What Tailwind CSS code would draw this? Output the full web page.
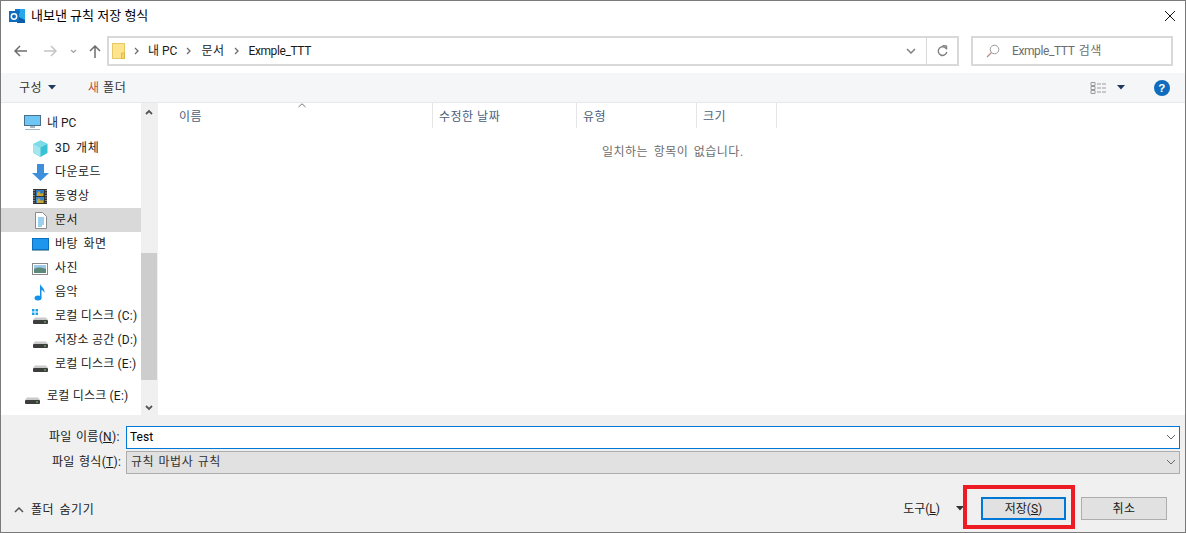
<!DOCTYPE html>
<html lang="ko">
<head>
<meta charset="utf-8">
<script src="https://cdn.jsdelivr.net/npm/@tailwindcss/browser@4"></script>
</head>
<body class="bg-white">
<div class="w-[1186px] h-[533px] overflow-hidden flex flex-col border border-[#7a7a7a] bg-white text-[12px] leading-[16px] tracking-[0.5px] [word-spacing:2px] text-[#1a1a1a] font-['Roboto','Noto_Sans_CJK_KR',sans-serif]">
  <!-- title -->
  <div class="h-[29px] shrink-0 flex items-center pl-[8px] pr-[9px]">
    <svg width="17" height="16" viewBox="0 0 17 16" class="mr-[5px]"><rect x="6" y="1" width="10" height="13" fill="#28a8ea"/><rect x="6" y="1" width="5" height="4" fill="#0f78d4"/><path d="M8 8l8 4v3H8z" fill="#0a5ea8"/><rect x="0" y="3" width="10" height="11" fill="#0f6cbd"/><circle cx="5" cy="8.500" r="2.700" fill="none" stroke="#fff" stroke-width="1.500"/></svg>
    <span class="text-[13px] text-black tracking-normal [word-spacing:0]">내보낸 규칙 저장 형식</span>
    <svg width="12" height="12" viewBox="0 0 12 12" class="ml-auto"><path d="M1 1l10 10M11 1L1 11" stroke="#111" stroke-width="1"/></svg>
  </div>
  <!-- nav -->
  <div class="h-[36px] shrink-0 flex items-center pt-[6px] pl-[13px] pr-[12px]">
    <div class="w-[93px] shrink-0 flex items-center">
      <svg width="13" height="12" viewBox="0 0 13 12"><path d="M6 1L1 6l5 5M1 6h12" fill="none" stroke="#6d6d6d" stroke-width="1.500"/></svg>
      <svg width="13" height="12" viewBox="0 0 13 12" class="ml-[17px]"><path d="M7 1l5 5-5 5M12 6H0" fill="none" stroke="#c4c4c4" stroke-width="1.500"/></svg>
      <svg width="7" height="5" viewBox="0 0 7 5" class="ml-[13px]"><path d="M1 1l2.500 2.500L6 1" fill="none" stroke="#a0a0a0" stroke-width="1.200"/></svg>
      <svg width="12" height="13" viewBox="0 0 12 13" class="ml-[12px]"><path d="M1 6l5-5 5 5M6 1v12" fill="none" stroke="#6d6d6d" stroke-width="1.500"/></svg>
    </div>
    <div class="w-[852px] h-[30px] shrink-0 border-2 border-[#d9d9d9] border-r-0 flex items-center pl-[3px]">
      <svg width="13" height="16" viewBox="0 0 13 16"><rect x="0.500" y="0.500" width="12" height="15" fill="#fde48d" stroke="#e6c868"/><path d="M9.500 10v5.500h3V10z" fill="#f7d36b" stroke="#e0b94e"/></svg>
      <svg width="5" height="8" viewBox="0 0 5 8" class="ml-[9px]"><path d="M1 1l3 3-3 3" fill="none" stroke="#6d6d6d" stroke-width="1.300"/></svg>
      <span class="ml-[9px] tracking-normal [word-spacing:0]">내 PC</span>
      <svg width="5" height="8" viewBox="0 0 5 8" class="ml-[9px]"><path d="M1 1l3 3-3 3" fill="none" stroke="#6d6d6d" stroke-width="1.300"/></svg>
      <span class="ml-[10px]">문서</span>
      <svg width="5" height="8" viewBox="0 0 5 8" class="ml-[9px]"><path d="M1 1l3 3-3 3" fill="none" stroke="#6d6d6d" stroke-width="1.300"/></svg>
      <span class="ml-[10px] tracking-[-0.4px]">Exmple_TTT</span>
      <svg width="10" height="6" viewBox="0 0 10 6" class="ml-auto mr-[10px]"><path d="M1 1l4 4 4-4" fill="none" stroke="#808080" stroke-width="1.500"/></svg>
      <div class="w-[33px] h-[30px] shrink-0 border-2 border-l-[1px] border-[#d9d9d9] flex items-center justify-center">
        <svg width="11" height="12" viewBox="0 0 11 12"><path d="M9 3.500A4.300 4.300 0 1 0 9.800 7" fill="none" stroke="#808080" stroke-width="1.400"/><path d="M5.500 0.500L9.500 1v3.500" fill="none" stroke="#808080" stroke-width="1.400"/></svg>
      </div>
    </div>
    <div class="ml-[12px] w-[202px] h-[30px] shrink-0 border-2 border-[#d9d9d9] flex items-center pl-[13px] text-[#6d6d6d]">
      <svg width="14" height="14" viewBox="0 0 14 14"><circle cx="8.500" cy="5.500" r="4.300" fill="none" stroke="#9a9a9a"/><path d="M5.500 8.500L1 13" stroke="#b58a8a" stroke-width="1.200"/></svg>
      <span class="ml-[12px] tracking-[-0.4px]">Exmple_TTT <span class="tracking-[0.5px]">검색</span></span>
    </div>
  </div>
  <div class="h-[7px] shrink-0"></div>
  <!-- toolbar -->
  <div class="h-[30px] shrink-0 bg-[#f5f6f7] border-b border-[#e8e8e8] flex items-center pl-[18px] pr-[15px] text-[#333]">
    <span>구성</span>
    <svg width="8" height="5" viewBox="0 0 8 5" class="ml-[6px]"><path d="M0 0h8L4 4.500z" fill="#1f3a5f"/></svg>
    <span class="ml-[32px] [word-spacing:0]"><span class="text-[#b5533c]">새</span> 폴더</span>
    <svg width="17" height="14" viewBox="0 0 17 14" class="ml-auto"><path d="M1 1.500h4v3H1zM1 5.500h4v3H1zM1 9.500h4v3H1z" fill="none" stroke="#9a9a9a"/><path d="M7 3h4M12 3h4M7 7h4M12 7h4M7 11h4M12 11h4" stroke="#9a9a9a"/></svg>
    <svg width="8" height="5" viewBox="0 0 8 5" class="ml-[10px]"><path d="M0 0h8L4 4.500z" fill="#1f3a5f"/></svg>
    <svg width="16" height="16" viewBox="0 0 16 16" class="ml-[29px]"><circle cx="8" cy="8" r="8" fill="#0f6cbd"/><text x="8" y="12" text-anchor="middle" font-size="11.500" font-weight="700" fill="#fff" font-family="Liberation Sans">?</text></svg>
  </div>
  <!-- main -->
  <div class="h-[312px] shrink-0 flex">
    <div class="w-[140px] shrink-0 relative overflow-hidden">
      <div class="absolute left-[23px] top-[8px] h-[24px] w-[117px] flex items-center gap-[6px]">
        <svg width="17" height="16" viewBox="0 0 17 16" class="shrink-0"><rect x="0.500" y="0.500" width="16" height="10" fill="#6ec6f5" stroke="#4a6f8a"/><path d="M6 11h5v2H6zM1 14h15v1H1z" fill="#a9b6c0"/></svg><span class="[word-spacing:0] tracking-normal">내 PC</span>
      </div>
      <div class="pt-[33px] pl-[31px]">
        <div class="h-[24px] flex items-center gap-[6px]">
          <svg width="17" height="17" viewBox="0 0 17 17" class="shrink-0"><path d="M8.500 0.500l7 3.500v9l-7 4-7-4V4z" fill="#39c1d6"/><path d="M1.500 4l7 3.500v9.500l-7-4z" fill="#a5e6ee"/><path d="M8.500 0.500l7 3.500-7 3.500-7-3.500z" fill="#7fdbe8"/></svg><span>3D 개체</span>
        </div>
        <div class="h-[24px] flex items-center gap-[6px]">
          <svg width="17" height="17" viewBox="0 0 17 17" class="shrink-0"><path d="M5 0h7v9h5l-8.500 8L0 9h5z" fill="#3d8fdc"/></svg><span>다운로드</span>
        </div>
        <div class="h-[24px] flex items-center gap-[6px]">
          <svg width="17" height="17" viewBox="0 0 17 17" class="shrink-0"><rect x="1" y="1" width="14" height="15" fill="#333"/><rect x="4" y="2" width="8" height="6" fill="#2f78c4"/><rect x="4" y="9" width="8" height="6" fill="#3c86cf"/><path d="M5 5l2-2 2 3 2-1v3H5zM5 12l2-2 2 3 2-1v3H5z" fill="#c9a62f"/><path d="M2 2v13M14 2v13" stroke="#ddd" stroke-dasharray="1 1.500"/></svg><span>동영상</span>
        </div>
      </div>
      <div class="h-[24px] flex items-center gap-[6px] bg-[#d9d9d9] pl-[31px]">
        <svg width="17" height="17" viewBox="0 0 17 17" class="shrink-0"><path d="M3.500 0.500h7l4 4v12h-11z" fill="#fff" stroke="#8a8a8a"/><path d="M6 6h6M6 8h6M6 10h6M6 12h6M6 14h4" stroke="#3aa0dc"/></svg><span>문서</span>
      </div>
      <div class="pl-[31px]">
        <div class="h-[24px] flex items-center gap-[6px]">
          <svg width="17" height="17" viewBox="0 0 17 17" class="shrink-0"><rect x="0.500" y="2.500" width="16" height="11" fill="#1d97ee" stroke="#0c6fbd"/><path d="M0 14h17v1H0z" fill="#8ab"/></svg><span>바탕 화면</span>
        </div>
        <div class="h-[24px] flex items-center gap-[6px]">
          <svg width="17" height="17" viewBox="0 0 17 17" class="shrink-0"><rect x="0.500" y="3.500" width="15" height="11" fill="#fff" stroke="#8a8a8a"/><rect x="2" y="5" width="12" height="4" fill="#9fc9e8"/><path d="M2 9c3-2 7-2 12 0v4H2z" fill="#5b8a7a"/></svg><span>사진</span>
        </div>
        <div class="h-[24px] flex items-center gap-[6px]">
          <svg width="17" height="17" viewBox="0 0 17 17" class="shrink-0"><ellipse cx="6" cy="14" rx="3.500" ry="2.500" fill="#1292e8"/><path d="M8 14V0c1 3 5 4 4.500 9-1-2-2-3-3-3v8z" fill="#1292e8"/></svg><span>음악</span>
        </div>
        <div class="h-[24px] flex items-center gap-[6px] whitespace-nowrap tracking-[0.2px] [word-spacing:0]">
          <svg width="17" height="17" viewBox="0 0 17 17" class="shrink-0"><rect x="1" y="12" width="15" height="4" rx="1" fill="#3d3d3d"/><path d="M3 9.500h11l2 2.500H1z" fill="#c9c9c9"/><rect x="12" y="13.500" width="2" height="1" fill="#5fe05f"/><path d="M0 1h2.500v2.500H0zM3.500 1H6v2.500H3.500zM0 4.500h2.500V7H0zM3.500 4.500H6V7H3.500z" fill="#18a0ea"/></svg><span>로컬 디스크 (C:)</span>
        </div>
        <div class="h-[24px] flex items-center gap-[6px] whitespace-nowrap tracking-[0.2px] [word-spacing:0]">
          <svg width="17" height="17" viewBox="0 0 17 17" class="shrink-0"><rect x="1" y="12" width="15" height="4" rx="1" fill="#3d3d3d"/><path d="M3 9.500h11l2 2.500H1z" fill="#c9c9c9"/><rect x="12" y="13.500" width="2" height="1" fill="#5fe05f"/></svg><span>저장소 공간 (D:)</span>
        </div>
        <div class="h-[24px] flex items-center gap-[6px] whitespace-nowrap tracking-[0.2px] [word-spacing:0]">
          <svg width="17" height="17" viewBox="0 0 17 17" class="shrink-0"><rect x="1" y="12" width="15" height="4" rx="1" fill="#3d3d3d"/><path d="M3 9.500h11l2 2.500H1z" fill="#c9c9c9"/><rect x="12" y="13.500" width="2" height="1" fill="#5fe05f"/></svg><span>로컬 디스크 (E:)</span>
        </div>
      </div>
      <div class="h-[24px] mt-[8px] pl-[23px] flex items-center gap-[6px] whitespace-nowrap tracking-[0.2px] [word-spacing:0]">
        <svg width="17" height="17" viewBox="0 0 17 17" class="shrink-0"><rect x="1" y="12" width="15" height="4" rx="1" fill="#3d3d3d"/><path d="M3 9.500h11l2 2.500H1z" fill="#c9c9c9"/><rect x="12" y="13.500" width="2" height="1" fill="#5fe05f"/></svg><span>로컬 디스크 (E:)</span>
      </div>
    </div>
    <!-- scrollbar -->
    <div class="w-[16px] shrink-0 bg-[#f0f0f0] flex flex-col">
      <div class="h-[17px] flex items-center justify-center"><svg width="8" height="6" viewBox="0 0 8 6"><path d="M1 5l3-3 3 3" fill="none" stroke="#555" stroke-width="1.800"/></svg></div>
      <div class="h-[133px]"></div>
      <div class="h-[127px] bg-[#cdcdcd]"></div>
      <div class="flex-1 flex items-end justify-center pb-[4px]"><svg width="8" height="6" viewBox="0 0 8 6"><path d="M1 1l3 3 3-3" fill="none" stroke="#555" stroke-width="1.800"/></svg></div>
    </div>
    <div class="w-[1px] shrink-0 bg-[#f0f0f0]"></div>
    <!-- list -->
    <div class="flex-1 relative">
      <svg width="8" height="5" viewBox="0 0 8 5" class="absolute left-[140px] top-0"><path d="M0.500 4L4 0.800 7.500 4" fill="none" stroke="#777"/></svg>
      <div class="flex h-[25px] text-[#4c607a] [word-spacing:0]">
        <div class="w-[275px] pl-[21px] pt-[3px] border-r border-[#e5e5e5] flex items-center">이름</div>
        <div class="w-[144px] pl-[6px] pt-[3px] border-r border-[#e5e5e5] flex items-center">수정한 날짜</div>
        <div class="w-[120px] pl-[6px] pt-[3px] border-r border-[#e5e5e5] flex items-center">유형</div>
        <div class="w-[80px] pl-[6px] pt-[3px] border-r border-[#e5e5e5] flex items-center">크기</div>
      </div>
      <div class="pt-[16px] pl-[444px] text-[#6d6d6d] whitespace-nowrap">일치하는 항목이 없습니다.</div>
    </div>
  </div>
  <!-- bottom -->
  <div class="flex-1 bg-[#f0f0f0] flex flex-col">
    <div class="flex items-center h-[24px] mt-[10px] pl-[48px] pr-[5px]">
      <span class="w-[77px] whitespace-nowrap [word-spacing:1px] tracking-[0.3px]">파일 이름(<u>N</u>):</span>
      <div class="flex-1 h-[23px] bg-white border border-[#0078d7] flex items-center pl-[3px] text-black tracking-normal">Test
        <svg width="10" height="6" viewBox="0 0 10 6" class="ml-auto mr-[3px]"><path d="M1 1l4 4 4-4" fill="none" stroke="#666"/></svg>
      </div>
    </div>
    <div class="flex items-center h-[24px] mt-[1px] pl-[51px] pr-[5px]">
      <span class="w-[74px] whitespace-nowrap [word-spacing:1px] tracking-[0.3px]">파일 형식(<u>T</u>):</span>
      <div class="flex-1 h-[23px] bg-[#e1e1e1] border border-[#adadad] flex items-center pl-[4px] text-[#333] [word-spacing:1px]">규칙 마법사 규칙
        <svg width="10" height="6" viewBox="0 0 10 6" class="ml-auto mr-[3px]"><path d="M1 1l4 4 4-4" fill="none" stroke="#666"/></svg>
      </div>
    </div>
    <div class="flex items-center h-[35px] mt-[17px] pl-[13px] relative">
      <svg width="10" height="6" viewBox="0 0 10 6" class="mt-[3px]"><path d="M1 5l4-4 4 4" fill="none" stroke="#555" stroke-width="1.500"/></svg>
      <span class="ml-[7px] mt-[3px]">폴더 숨기기</span>
      <span class="ml-auto whitespace-nowrap tracking-normal">도구(<u>L</u>)</span>
      <svg width="8" height="5" viewBox="0 0 8 5" class="ml-[16px]"><path d="M0 0h8L4 4.500z" fill="#333"/></svg>
      <div class="ml-[17px] w-[85px] h-[23px] bg-[#e1e1e1] border-2 border-[#0078d7] flex items-center justify-center tracking-normal">저장(<u>S</u>)</div>
      <div class="ml-[15px] mr-[18px] w-[86px] h-[23px] bg-[#e1e1e1] border border-[#adadad] flex items-center justify-center">취소</div>
      <div class="absolute left-[962px] top-[-6px] w-[112px] h-[44px] border-[4px] border-[#ed1c24]"></div>
    </div>
  </div>
</div>
</body>
</html>
